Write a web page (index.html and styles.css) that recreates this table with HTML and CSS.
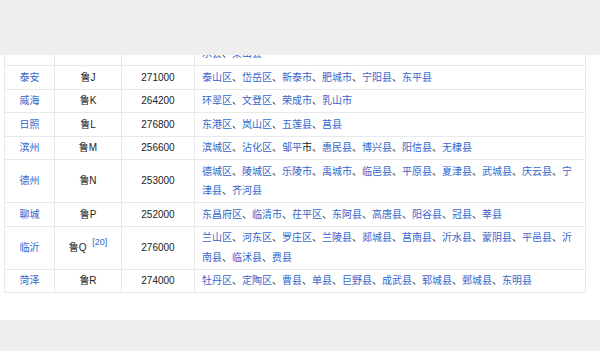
FILE: index.html
```html
<!DOCTYPE html>
<html lang="zh-CN">
<head>
<meta charset="utf-8">
<title>山东省车牌</title>
<link rel="stylesheet" href="styles.css">
</head>
<body>
<header class="topbar"></header>
<main class="content">
  <table class="plates">
    <colgroup>
      <col class="c-city"><col class="c-code"><col class="c-post"><col class="c-area">
    </colgroup>
    <tbody>
      <tr class="first">
        <td class="city"><a href="#">济宁</a></td><td class="code">鲁H</td><td class="post">272000</td>
        <td class="area"><a href="#">任城区</a>、<a href="#">兖州区</a>、<a href="#">曲阜市</a>、<a href="#">邹城市</a>、<a href="#">微山县</a>、<a href="#">鱼台县</a>、<a href="#">金乡县</a>、<a href="#">嘉祥县</a>、<a href="#">汶上县</a>、<a href="#">泗水县</a>、<a href="#">梁山县</a></td>
      </tr>
      <tr>
        <td class="city"><a href="#">泰安</a></td><td class="code">鲁J</td><td class="post">271000</td>
        <td class="area"><a href="#">泰山区</a>、<a href="#">岱岳区</a>、<a href="#">新泰市</a>、<a href="#">肥城市</a>、<a href="#">宁阳县</a>、<a href="#">东平县</a></td>
      </tr>
      <tr>
        <td class="city"><a href="#">威海</a></td><td class="code">鲁K</td><td class="post">264200</td>
        <td class="area"><a href="#">环翠区</a>、<a href="#">文登区</a>、<a href="#">荣成市</a>、<a href="#">乳山市</a></td>
      </tr>
      <tr>
        <td class="city"><a href="#">日照</a></td><td class="code">鲁L</td><td class="post">276800</td>
        <td class="area"><a href="#">东港区</a>、<a href="#">岚山区</a>、<a href="#">五莲县</a>、<a href="#">莒县</a></td>
      </tr>
      <tr>
        <td class="city"><a href="#">滨州</a></td><td class="code">鲁M</td><td class="post">256600</td>
        <td class="area"><a href="#">滨城区</a>、<a href="#">沾化区</a>、<a href="#">邹平</a>市、<a href="#">惠民县</a>、<a href="#">博兴县</a>、<a href="#">阳信县</a>、<a href="#">无棣县</a></td>
      </tr>
      <tr>
        <td class="city"><a href="#">德州</a></td><td class="code">鲁N</td><td class="post">253000</td>
        <td class="area"><a href="#">德城区</a>、<a href="#">陵城区</a>、<a href="#">乐陵市</a>、<a href="#">禹城市</a>、<a href="#">临邑县</a>、<a href="#">平原县</a>、<a href="#">夏津县</a>、<a href="#">武城县</a>、<a href="#">庆云县</a>、<a href="#">宁津县</a>、<a href="#">齐河县</a></td>
      </tr>
      <tr>
        <td class="city"><a href="#">聊城</a></td><td class="code">鲁P</td><td class="post">252000</td>
        <td class="area"><a href="#">东昌府区</a>、<a href="#">临清市</a>、<a href="#">茌平区</a>、<a href="#">东阿县</a>、<a href="#">高唐县</a>、<a href="#">阳谷县</a>、<a href="#">冠县</a>、<a href="#">莘县</a></td>
      </tr>
      <tr>
        <td class="city"><a href="#">临沂</a></td><td class="code">鲁Q <sup class="ref"><a href="#">[20]</a></sup></td><td class="post">276000</td>
        <td class="area"><a href="#">兰山区</a>、<a href="#">河东区</a>、<a href="#">罗庄区</a>、<a href="#">兰陵县</a>、<a href="#">郯城县</a>、<a href="#">莒南县</a>、<a href="#">沂水县</a>、<a href="#">蒙阴县</a>、<a href="#">平邑县</a>、<a href="#">沂南县</a>、<a href="#">临沭县</a>、<a href="#">费县</a></td>
      </tr>
      <tr>
        <td class="city"><a href="#">菏泽</a></td><td class="code">鲁R</td><td class="post">274000</td>
        <td class="area"><a href="#">牡丹区</a>、<a href="#">定陶区</a>、<a href="#">曹县</a>、<a href="#">单县</a>、<a href="#">巨野县</a>、<a href="#">成武县</a>、<a href="#">郓城县</a>、<a href="#">鄄城县</a>、<a href="#">东明县</a></td>
      </tr>
    </tbody>
  </table>
</main>
<footer class="bottombar"></footer>
</body>
</html>
```

FILE: styles.css
```css
html, body {
  margin: 0;
  padding: 0;
  background: #ffffff;
  height: 351px;
  overflow: hidden;
}

body {
  font-family: "Liberation Sans", "Noto Sans CJK SC", sans-serif;
  font-size: 10px;
  color: #222222;
}

.topbar {
  position: fixed;
  top: 0;
  left: 0;
  right: 0;
  height: 55px;
  background: #eeeeee;
  z-index: 2;
}

.content {
  padding: 22px 0 0 4px;
}

.plates {
  width: 581px;
  table-layout: fixed;
  border-collapse: collapse;
  border: 1px solid #e8e9eb;
}

.c-city { width: 50px; }
.c-code { width: 67px; }
.c-post { width: 73px; }
.c-area { width: 391px; }

.plates td {
  border: 1px solid #e8e9eb;
  padding: 1.5px 7px;
  line-height: 19.5px;
  vertical-align: middle;
}

.plates a {
  color: #3366cc;
  text-decoration: none;
}

.city, .code, .post {
  text-align: center;
}

.area {
  text-align: left;
}

.ref {
  font-size: 9px;
  line-height: 0;
  vertical-align: 6px;
  padding-left: 3px;
}

.bottombar {
  margin-top: 27px;
  height: 40px;
  background: #eeeeee;
}
```
